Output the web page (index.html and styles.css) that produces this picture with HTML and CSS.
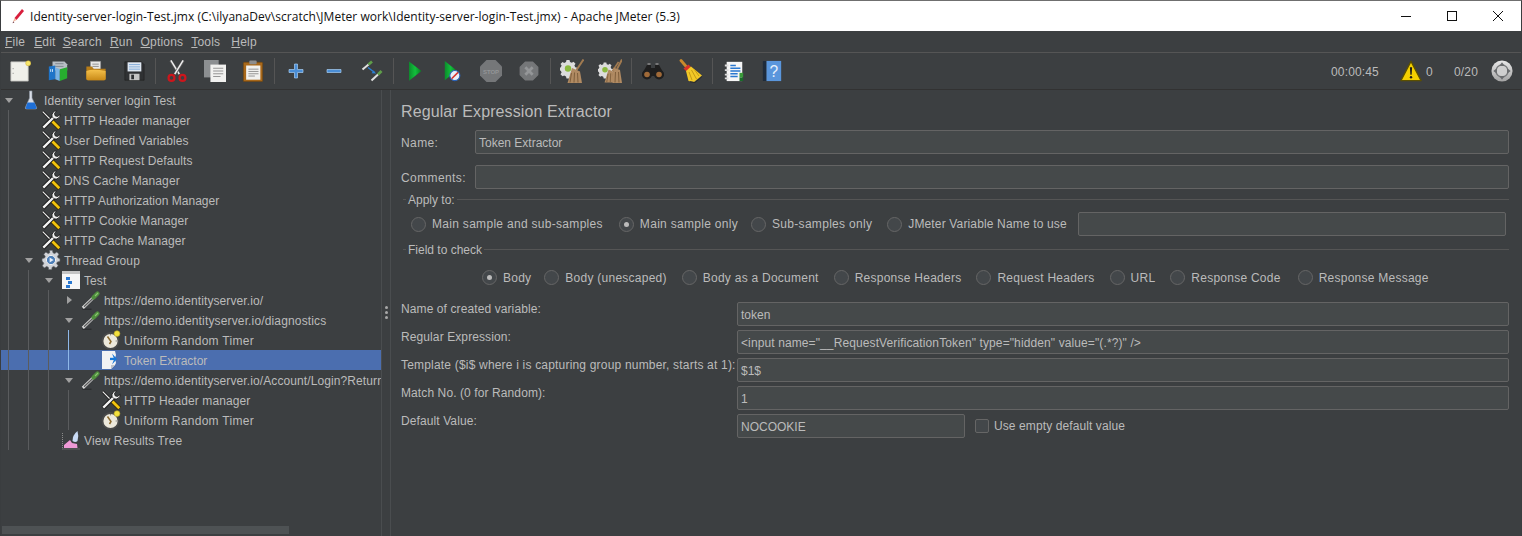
FILE: index.html
```html
<!DOCTYPE html>
<html lang="en">
<head>
<meta charset="utf-8">
<title>Apache JMeter</title>
<link rel="stylesheet" href="styles.css">
</head>
<body>
<svg class="sprite" aria-hidden="true">
<defs>
<linearGradient id="g-green" x1="0" y1="0" x2="1" y2="0"><stop offset="0" stop-color="#0c8c2c"/><stop offset=".5" stop-color="#12c03c"/><stop offset="1" stop-color="#0a7a22"/></linearGradient>
<linearGradient id="g-grey" x1="0" y1="0" x2="0" y2="1"><stop offset="0" stop-color="#e8e8e8"/><stop offset="1" stop-color="#a4a4a4"/></linearGradient>
<linearGradient id="g-folder" x1="0" y1="0" x2="0" y2="1"><stop offset="0" stop-color="#f4c04a"/><stop offset="1" stop-color="#c98a18"/></linearGradient>
<symbol id="i-tool" viewBox="0 0 20 20">
<path d="M1.500 1.500 10 10" stroke="#141414" stroke-width="2.600" fill="none"/>
<path d="M1.700 1.700 10 10" stroke="#efefef" stroke-width="1.200" fill="none"/>
<path d="M10.500 10.500 18.500 18.500" stroke="#2e2400" stroke-width="4.200" fill="none"/>
<path d="M11 11 18.300 18.300" stroke="#f2c40f" stroke-width="2.800" fill="none"/>
<path d="M2 18 13 7" stroke="#141414" stroke-width="4" fill="none"/>
<path d="M2.300 17.700 13 7" stroke="#f2f2f2" stroke-width="2.400" fill="none"/>
<path d="M15.600.8a4.600 4.600 0 0 0-4.400 6.100l1.900 1.900a4.600 4.600 0 0 0 6.100-4.400l-2.700 2.100-2.400-.7-.6-2.300z" fill="#f0f0f0" stroke="#141414" stroke-width=".8"/>
</symbol>
<symbol id="i-flask" viewBox="0 0 20 20">
<path d="M8.500 1h2.500v7l4.600 9.500q.4 1.500-1.200 1.500H5.600q-1.600 0-1.200-1.500L8.500 8z" fill="#d8dde6" stroke="#8d97a5" stroke-width=".6"/>
<path d="M6.500 12.500h7l2 5q.2 1.400-1.200 1.400H5.700q-1.400 0-1-1.400z" fill="#1f6fd6"/>
</symbol>
<symbol id="i-gear" viewBox="0 0 20 20">
<path d="M8.500 1h3l.5 2.600 1.600.7 2.200-1.500 2.200 2.200-1.500 2.200.7 1.600L19 9.300v3l-2.600.5-.7 1.600 1.500 2.200-2.200 2.200-2.200-1.500-1.600.7-.5 2.500h-3l-.5-2.500-1.600-.7-2.200 1.500-2.200-2.200 1.500-2.200-.7-1.600L1 12.300v-3l2.500-.5.7-1.600-1.500-2.200 2.200-2.200 2.200 1.500 1.600-.7z" fill="#d2d4d8" stroke="#55595e" stroke-width=".7" transform="translate(0 -.8)"/>
<circle cx="10" cy="10" r="4.600" fill="#4d7fb8" stroke="#f0f0f0" stroke-width="1"/>
<path d="M8.600 7.600 12.600 10l-4 2.400z" fill="#e8eef8"/>
</symbol>
<symbol id="i-frag" viewBox="0 0 20 20">
<rect x="1" y="1" width="18" height="18" fill="#f6f6f6"/>
<rect x="1" y="1" width="18" height="3" fill="#c4c4c4"/>
<rect x="5" y="7" width="4" height="3" fill="#2a78d0"/>
<rect x="7" y="11" width="4" height="3" fill="#2a78d0"/>
<rect x="5" y="15" width="4" height="3" fill="#2a78d0"/>
</symbol>
<symbol id="i-drop" viewBox="0 0 20 20">
<path d="M1.500 19.300h9" stroke="#2c2e30" stroke-width="1.400" fill="none"/>
<path d="M1.800 17.800 12.500 7.500" stroke="#d8d8d8" stroke-width="3" fill="none"/>
<path d="M3 16.800 12 8.200" stroke="#5c5c5c" stroke-width="1.200" fill="none"/>
<path d="M12.500 7.500 16.500 3.500" stroke="#4f8f3d" stroke-width="4.200" stroke-linecap="round" fill="none"/>
<path d="M14 6 17 3" stroke="#8cc473" stroke-width="1.100" fill="none"/>
</symbol>
<symbol id="i-timer" viewBox="0 0 20 20">
<circle cx="9.500" cy="11" r="8" fill="#ede9dc" stroke="#4a4a4a" stroke-width="1.800"/>
<path d="M6.500 6.500 10 11.500 8.500 14" stroke="#8c6a2e" stroke-width="1.500" fill="none"/>
<path d="M9.500 4v1.400M16 11h-1.400" stroke="#888" fill="none"/>
<circle cx="16" cy="3.600" r="2.900" fill="#f4e13e" stroke="#b9a521" stroke-width=".6"/>
</symbol>
<symbol id="i-extract" viewBox="0 0 20 20">
<path d="M1 1h13l1 4-1 3 1 5-1 2-4 4H1z" fill="#f2f2f4"/>
<path d="M10 19v-4h4z" fill="#bfc2c8"/>
<path d="M11 3.500 16 9l-5 5.500 2.200-5.500z" fill="#1878d8"/>
<path d="M9 7.800h5v2.300H9z" fill="#1878d8"/>
</symbol>
<symbol id="i-result" viewBox="0 0 20 20">
<path d="M1.500 3v16.200M1.500 19H19" stroke="#8b8b8b" stroke-dasharray="1 1" fill="none"/>
<path d="M3 18v-3l6-5 2 3 5 1 .5 4z" fill="#ef9ad7"/>
<path d="M11.500 11q0-6 5-10 1.500 5 0 10-2 2-5 0z" fill="#c9dbf5"/>
</symbol>
<symbol id="t-new" viewBox="0 0 24 24">
<path d="M2 2h19v21H2z" fill="#f0f0ea" stroke="#b9b9b3" stroke-width=".8"/>
<path d="M4.500 9v1M4.500 14v1" stroke="#777" fill="none"/>
<circle cx="21" cy="3.500" r="2.800" fill="#f6e56a" stroke="#c9a92f" stroke-width=".5"/>
</symbol>
<symbol id="t-tmpl" viewBox="0 0 24 24">
<path d="M6 1.500h13l3 3v7H6z" fill="#b8bec4"/>
<path d="M9 4h9M9 7h9" stroke="#7e868e" fill="none"/>
<path d="M2 7l7-1v15l-7 1z" fill="#1f74c8"/>
<path d="M9 8l5 2v13l-5-2z" fill="#79b3e6"/>
<path d="M14 10l8-2v12l-8 3z" fill="#27ad2f"/>
<path d="M4 10v3M6 10v3" stroke="#cfe6fa" fill="none"/>
</symbol>
<symbol id="t-open" viewBox="0 0 24 24">
<path d="M6 1.500h11v10H6z" fill="#e8e8e8" stroke="#9a9a9a" stroke-width=".6"/>
<path d="M8 4.500h7M8 7h7" stroke="#8a8a8a" fill="none"/>
<path d="M1.500 7h6l2 2.500h13v11q0 1.500-1.500 1.500H3q-1.500 0-1.500-1.500z" fill="#b77d18"/>
<path d="M1.500 12q7-2.500 21 0v8.500q0 1.500-1.500 1.500H3q-1.500 0-1.500-1.500z" fill="url(#g-folder)"/>
</symbol>
<symbol id="t-save" viewBox="0 0 24 24">
<path d="M2 2h18l3 3v17H2z" fill="#2f3133" stroke="#1b1b1b" stroke-width=".6"/>
<rect x="5" y="2.500" width="15" height="10" fill="#dfe8f2"/>
<path d="M6.500 5h12M6.500 7.500h12M6.500 10h12" stroke="#7ea8d8" fill="none"/>
<rect x="7" y="15" width="11" height="7" fill="#c4c4c4"/>
<rect x="9" y="16" width="3" height="5" fill="#2f3133"/>
</symbol>
<symbol id="t-cut" viewBox="0 0 24 24">
<path d="M5 .5l9.500 15" stroke="#5a5a5a" stroke-width="3" fill="none"/>
<path d="M5.300 .5l9.200 15" stroke="#f0f0f0" stroke-width="1.600" fill="none"/>
<path d="M19 .5L9.500 15.500" stroke="#5a5a5a" stroke-width="3" fill="none"/>
<path d="M18.700 .5L9.500 15.500" stroke="#f0f0f0" stroke-width="1.600" fill="none"/>
<circle cx="6" cy="19.500" r="3.200" fill="none" stroke="#cc161c" stroke-width="2.400"/>
<circle cx="18" cy="19.500" r="3.200" fill="none" stroke="#cc161c" stroke-width="2.400"/>
</symbol>
<symbol id="t-copy" viewBox="0 0 24 24">
<rect x="0" y="0" width="16" height="19" fill="#8c8f91"/>
<path d="M7 5h17v19H7z" fill="#f1f1ef"/>
<path d="M10 9h11M10 12h11M10 15h11M10 18h8" stroke="#8d8d8d" fill="none"/>
</symbol>
<symbol id="t-paste" viewBox="0 0 24 24">
<rect x="1.500" y="2.500" width="21" height="21" rx="1" fill="#a8681a" stroke="#6e430d" stroke-width=".6"/>
<path d="M4.500 6h15.500v15.500H4.500z" fill="#f1f1ef"/>
<rect x="8" y=".5" width="8" height="4" rx="1" fill="#8d8d8d"/>
<path d="M7 10h11M7 12.500h11M7 15h11M7 17.500h7" stroke="#8d8d8d" fill="none"/>
</symbol>
<symbol id="t-plus" viewBox="0 0 24 24">
<path d="M10.500 5h3v5.500H19v3h-5.500V19h-3v-5.500H5v-3h5.500z" fill="#4a8ed6" stroke="#a8cdf0" stroke-width=".7"/>
</symbol>
<symbol id="t-minus" viewBox="0 0 24 24">
<path d="M5 10.500h14v3H5z" fill="#4a8ed6" stroke="#a8cdf0" stroke-width=".7"/>
</symbol>
<symbol id="t-toggle" viewBox="0 0 24 24">
<path d="M2.500 10.500 8.500 5.500" stroke="#e0e0e0" stroke-width="2" fill="none"/>
<path d="M8.500 5.500l3.500-3" stroke="#5f9e4a" stroke-width="2.800" fill="none"/>
<path d="M11.500 21.500 18 15.500" stroke="#e0e0e0" stroke-width="2" fill="none"/>
<path d="M18 15.500l3.500-3.500" stroke="#5f9e4a" stroke-width="2.800" fill="none"/>
<path d="M8 8.500l6 4.500" stroke="#2b7fd4" stroke-width="1.300" fill="none"/>
<path d="M16 14.500l-4.500-.3 2.200-2.700z" fill="#2b7fd4"/>
</symbol>
<symbol id="t-start" viewBox="0 0 24 24">
<path d="M5.500 1.500 19 12 5.500 22.500z" fill="url(#g-green)"/>
</symbol>
<symbol id="t-startn" viewBox="0 0 24 24">
<path d="M3 1l13 10.500L3 22z" fill="url(#g-green)"/>
<circle cx="14" cy="17" r="5.500" fill="#e8eef8" stroke="#2a62b8" stroke-width="1.200"/>
<path d="M10.500 20.500l7-7" stroke="#d6312a" stroke-width="1.600" fill="none"/>
</symbol>
<symbol id="t-stop" viewBox="0 0 24 24">
<path d="M7.500 1h9L23 7.500v9L16.500 23h-9L1 16.500v-9z" fill="#757779"/>
<text x="12" y="14.500" text-anchor="middle" class="stop-text">STOP</text>
</symbol>
<symbol id="t-shut" viewBox="0 0 24 24">
<path d="M8 2.500h8L21.500 8v8L16 21.500H8L2.500 16V8z" fill="#757779" stroke="#757779" stroke-width="1.500" stroke-linejoin="round"/>
<path d="M8 8l8 8M16 8l-8 8" stroke="#949698" stroke-width="3" fill="none"/>
</symbol>
<symbol id="t-clear" viewBox="0 0 24 24">
<path d="M6.500 1h3l.5 2 1.800.8 1.700-1.100 2 2-1.100 1.700.8 1.800 2 .5v3l-2 .5-.8 1.800 1.100 1.700-2 2-1.700-1.100-1.800.8-.5 2h-3l-.5-2-1.800-.8L2.500 17.300.5 15.300l1.100-1.700-.8-1.800-.8-.2v-3l.8-.2.8-1.800-1.100-1.700 2-2 1.700 1.100L6 3z" fill="#dcdcdc"/>
<circle cx="8" cy="9.500" r="3.200" fill="#8ab93f"/>
<path d="M23.500 .5 16.500 11" stroke="#a07a50" stroke-width="2" fill="none"/>
<path d="M12 9l8 3.500L22 24H7.500z" fill="#b08a62"/>
<path d="M11.500 14l-1.500 9.500M14.500 13.500l-.5 10M17.500 14l.5 9.500" stroke="#7f5f3c" fill="none"/>
</symbol>
<symbol id="t-clearall" viewBox="0 0 24 24">
<use href="#t-clear" width="21" height="22" x="0" y="2"/>
<path d="M24 .5 19 10" stroke="#a07a50" stroke-width="2" fill="none"/>
<path d="M15.500 8.500l6.500 2.500 2 13h-9.500z" fill="#b08a62"/>
<path d="M17.500 13l-.5 10.500M20.500 13l.5 10.500" stroke="#7f5f3c" fill="none"/>
</symbol>
<symbol id="t-search" viewBox="0 0 24 24">
<path d="M6 6h4v3h4V6h4l5 9v2H1v-2z" fill="#1f1f1f"/>
<path d="M6.500 5h3M14.500 5h3" stroke="#8a8a8a" stroke-width="1.400" fill="none"/>
<circle cx="6" cy="15.500" r="5" fill="#1f1f1f"/>
<circle cx="18" cy="15.500" r="5" fill="#1f1f1f"/>
<circle cx="6" cy="15.500" r="2.800" fill="#a06a38"/>
<circle cx="18" cy="15.500" r="2.800" fill="#a06a38"/>
</symbol>
<symbol id="t-broom" viewBox="0 0 24 24">
<path d="M2 1.500l6 7" stroke="#c8892c" stroke-width="2.800" stroke-linecap="round" fill="none"/>
<path d="M4.500 9.500l5-4 2.500 2.500-4.500 4.500z" fill="#d6312a"/>
<path d="M7 12l5-4.500 11 9-8 6.500-5.500-1z" fill="#f2c827"/>
<path d="M10 13l3 8M12.500 11l5 9M15 10l5 7" stroke="#c59a14" fill="none"/>
<path d="M11 22.800l5 .8 7-6" stroke="#2a2c2e" stroke-width="1" fill="none"/>
</symbol>
<symbol id="t-func" viewBox="0 0 24 24">
<rect x="4" y="2" width="17" height="21" fill="#f6f6f6"/>
<path d="M8 6h6M8 9h11M8 12h11M8 15h8M8 18h8" stroke="#2a78d0" stroke-width="1.400" fill="none"/>
<rect x="18" y="14" width="4" height="5" fill="#3a9a3a"/>
<rect x="18" y="19" width="4" height="4" fill="#1a6a2a"/>
<path d="M2 6h4M2 11h4M2 16h4M2 20h4" stroke="#dcdcdc" stroke-width="2" fill="none"/>
</symbol>
<symbol id="t-help" viewBox="0 0 24 24">
<path d="M3 1h3v22H3q-1 0-1-1V2q0-1 1-1z" fill="#1f2b3a"/>
<rect x="6" y="1" width="16" height="22" fill="#5a96dc"/>
<text x="14" y="18" text-anchor="middle" class="help-text">?</text>
</symbol>
<symbol id="t-warn" viewBox="0 0 24 24">
<path d="M12 1.500 23 22.500H1z" fill="#f4d000" stroke="#5c5000" stroke-width="1.400" stroke-linejoin="round"/>
<path d="M10.800 8h2.400l-.5 8h-1.400z" fill="#1c1c1c"/>
<circle cx="12" cy="18.800" r="1.300" fill="#1c1c1c"/>
</symbol>
<symbol id="t-global" viewBox="0 0 24 24">
<circle cx="12" cy="12" r="11.500" fill="url(#g-grey)"/>
<circle cx="12" cy="12" r="6.500" fill="none" stroke="#7d7f81" stroke-width="1.600"/>
<path d="M12 2.500 15 6.500H9zM12 21.500 9 17.500h6zM2.500 12 6.500 9v6zM21.500 12 17.500 15V9z" fill="#6a6c6e"/>
<circle cx="12" cy="12" r="5.500" fill="#cfcfcf"/>
</symbol>
</defs>
</svg>

<div class="window">
  <header class="titlebar">
    <svg class="app-icon" viewBox="0 0 16 16"><path d="M13 1 5.500 10 7.500 12 15 3z" fill="#d81e3c"/><path d="M5.500 10 4 14l3.500-2z" fill="#f2b8a0"/><path d="M4.300 13.500l-.8 1.800 1.900-1z" fill="#5c2030"/></svg>
    <span class="title-text">Identity-server-login-Test.jmx (C:\ilyanaDev\scratch\JMeter work\Identity-server-login-Test.jmx) - Apache JMeter (5.3)</span>
    <div class="win-controls">
      <span class="win-btn"><svg class="win-glyph" viewBox="0 0 12 12"><path d="M1 6.500h10" stroke="#111" fill="none"/></svg></span>
      <span class="win-btn"><svg class="win-glyph" viewBox="0 0 12 12"><rect x="1.500" y="1.500" width="9" height="9" stroke="#111" fill="none"/></svg></span>
      <span class="win-btn"><svg class="win-glyph" viewBox="0 0 12 12"><path d="M1 1l10 10M11 1 1 11" stroke="#111" fill="none"/></svg></span>
    </div>
  </header>

  <nav class="menubar">
    <span class="menu menu-file"><u>F</u>ile</span>
    <span class="menu menu-edit"><u>E</u>dit</span>
    <span class="menu"><u>S</u>earch</span>
    <span class="menu"><u>R</u>un</span>
    <span class="menu"><u>O</u>ptions</span>
    <span class="menu menu-tools"><u>T</u>ools</span>
    <span class="menu"><u>H</u>elp</span>
  </nav>

  <div class="toolbar">
    <span class="tool"><svg class="tool-icon"><use href="#t-new"/></svg></span>
    <span class="tool"><svg class="tool-icon"><use href="#t-tmpl"/></svg></span>
    <span class="tool"><svg class="tool-icon"><use href="#t-open"/></svg></span>
    <span class="tool"><svg class="tool-icon"><use href="#t-save"/></svg></span>
    <span class="tool-sep"></span>
    <span class="tool"><svg class="tool-icon"><use href="#t-cut"/></svg></span>
    <span class="tool"><svg class="tool-icon"><use href="#t-copy"/></svg></span>
    <span class="tool"><svg class="tool-icon"><use href="#t-paste"/></svg></span>
    <span class="tool-sep"></span>
    <span class="tool"><svg class="tool-icon tool-lg"><use href="#t-plus"/></svg></span>
    <span class="tool"><svg class="tool-icon tool-lg"><use href="#t-minus"/></svg></span>
    <span class="tool"><svg class="tool-icon tool-lg"><use href="#t-toggle"/></svg></span>
    <span class="tool-sep"></span>
    <span class="tool"><svg class="tool-icon"><use href="#t-start"/></svg></span>
    <span class="tool"><svg class="tool-icon"><use href="#t-startn"/></svg></span>
    <span class="tool"><svg class="tool-icon tool-lg"><use href="#t-stop"/></svg></span>
    <span class="tool"><svg class="tool-icon"><use href="#t-shut"/></svg></span>
    <span class="tool-sep"></span>
    <span class="tool"><svg class="tool-icon tool-lg"><use href="#t-clear"/></svg></span>
    <span class="tool"><svg class="tool-icon tool-lg"><use href="#t-clearall"/></svg></span>
    <span class="tool-sep"></span>
    <span class="tool"><svg class="tool-icon tool-lg"><use href="#t-search"/></svg></span>
    <span class="tool"><svg class="tool-icon tool-lg"><use href="#t-broom"/></svg></span>
    <span class="tool-sep"></span>
    <span class="tool"><svg class="tool-icon"><use href="#t-func"/></svg></span>
    <span class="tool"><svg class="tool-icon"><use href="#t-help"/></svg></span>
    <div class="status">
      <span class="status-time">00:00:45</span>
      <svg class="status-warn"><use href="#t-warn"/></svg>
      <span class="status-errs">0</span>
      <span class="status-threads">0/20</span>
      <svg class="status-global"><use href="#t-global"/></svg>
    </div>
  </div>

  <main class="split">
    <aside class="tree-pane">
      <div class="tree">
        <span class="guide guide-a"></span>
        <span class="guide guide-b"></span>
        <span class="guide guide-c"></span>
        <span class="guide guide-d"></span>
        <span class="guide guide-e"></span>
        <div class="row l0"><span class="arrow down"></span><svg class="node-icon"><use href="#i-flask"/></svg><span class="node-text">Identity server login Test</span></div>
        <div class="row l1"><span class="arrow"></span><svg class="node-icon"><use href="#i-tool"/></svg><span class="node-text">HTTP Header manager</span></div>
        <div class="row l1"><span class="arrow"></span><svg class="node-icon"><use href="#i-tool"/></svg><span class="node-text">User Defined Variables</span></div>
        <div class="row l1"><span class="arrow"></span><svg class="node-icon"><use href="#i-tool"/></svg><span class="node-text">HTTP Request Defaults</span></div>
        <div class="row l1"><span class="arrow"></span><svg class="node-icon"><use href="#i-tool"/></svg><span class="node-text">DNS Cache Manager</span></div>
        <div class="row l1"><span class="arrow"></span><svg class="node-icon"><use href="#i-tool"/></svg><span class="node-text narrow">HTTP Authorization Manager</span></div>
        <div class="row l1"><span class="arrow"></span><svg class="node-icon"><use href="#i-tool"/></svg><span class="node-text">HTTP Cookie Manager</span></div>
        <div class="row l1"><span class="arrow"></span><svg class="node-icon"><use href="#i-tool"/></svg><span class="node-text">HTTP Cache Manager</span></div>
        <div class="row l1"><span class="arrow down"></span><svg class="node-icon"><use href="#i-gear"/></svg><span class="node-text">Thread Group</span></div>
        <div class="row l2"><span class="arrow down"></span><svg class="node-icon"><use href="#i-frag"/></svg><span class="node-text">Test</span></div>
        <div class="row l3"><span class="arrow right"></span><svg class="node-icon"><use href="#i-drop"/></svg><span class="node-text">https://demo.identityserver.io/</span></div>
        <div class="row l3"><span class="arrow down"></span><svg class="node-icon"><use href="#i-drop"/></svg><span class="node-text url">https://demo.identityserver.io/diagnostics</span></div>
        <div class="row l4"><span class="arrow"></span><svg class="node-icon"><use href="#i-timer"/></svg><span class="node-text spaced">Uniform Random Timer</span></div>
        <div class="row l4 selected"><span class="arrow"></span><svg class="node-icon"><use href="#i-extract"/></svg><span class="node-text tight">Token Extractor</span></div>
        <div class="row l3"><span class="arrow down"></span><svg class="node-icon"><use href="#i-drop"/></svg><span class="node-text">https://demo.identityserver.io/Account/Login?Return</span></div>
        <div class="row l4"><span class="arrow"></span><svg class="node-icon"><use href="#i-tool"/></svg><span class="node-text">HTTP Header manager</span></div>
        <div class="row l4"><span class="arrow"></span><svg class="node-icon"><use href="#i-timer"/></svg><span class="node-text spaced">Uniform Random Timer</span></div>
        <div class="row l2"><span class="arrow"></span><svg class="node-icon"><use href="#i-result"/></svg><span class="node-text">View Results Tree</span></div>
      </div>
      <div class="hscroll"><div class="hscroll-thumb"></div></div>
    </aside>

    <div class="divider"><span class="dot"></span><span class="dot"></span><span class="dot"></span></div>

    <section class="editor">
      <h1 class="editor-title">Regular Expression Extractor</h1>
      <div class="name-row"><span class="name-label">Name:</span><div class="field grow">Token Extractor</div></div>
      <div class="name-row comments"><span class="name-label">Comments:</span><div class="field grow"></div></div>

      <div class="legend"><span class="legend-text">Apply to:</span></div>
      <div class="radios radios-apply">
        <span class="radio r-main"><span class="dial"></span>Main sample and sub-samples</span>
        <span class="radio r-only"><span class="dial on"></span>Main sample only</span>
        <span class="radio"><span class="dial"></span>Sub-samples only</span>
        <span class="radio r-var"><span class="dial"></span>JMeter Variable Name to use</span>
        <div class="field grow apply-field"></div>
      </div>

      <div class="legend"><span class="legend-text">Field to check</span></div>
      <div class="radios radios-field">
        <span class="radio r-body"><span class="dial on"></span>Body</span>
        <span class="radio"><span class="dial"></span>Body (unescaped)</span>
        <span class="radio"><span class="dial"></span>Body as a Document</span>
        <span class="radio"><span class="dial"></span>Response Headers</span>
        <span class="radio"><span class="dial"></span>Request Headers</span>
        <span class="radio"><span class="dial"></span>URL</span>
        <span class="radio r-code"><span class="dial"></span>Response Code</span>
        <span class="radio"><span class="dial"></span>Response Message</span>
      </div>

      <div class="grid-form">
        <span class="grid-label">Name of created variable:</span><div class="field">token</div>
        <span class="grid-label">Regular Expression:</span><div class="field regex">&lt;input name="__RequestVerificationToken" type="hidden" value="(.*?)" /&gt;</div>
        <span class="grid-label wide">Template ($i$ where i is capturing group number, starts at 1):</span><div class="field">$1$</div>
        <span class="grid-label">Match No. (0 for Random):</span><div class="field">1</div>
        <span class="grid-label">Default Value:</span>
        <div class="default-row"><div class="field default-field">NOCOOKIE</div><span class="check"></span><span class="check-text">Use empty default value</span></div>
      </div>
    </section>
  </main>
</div>
</body>
</html>
```

FILE: styles.css
```css
* { box-sizing: border-box; }
html, body { margin: 0; padding: 0; height: 100%; overflow: hidden; }
body { background: #3c3f41; color: #bbbbbb; font: 12px "Liberation Sans", Arial, sans-serif; }
.sprite { position: absolute; width: 0; height: 0; overflow: hidden; }
.stop-text { font: bold 6px "Liberation Sans", sans-serif; fill: #939597; }
.help-text { font: 17px "Liberation Sans", sans-serif; fill: #e6f0fb; }

.window { height: 536px; display: flex; flex-direction: column; border-top: 1px solid #6f6f6f; border-left: 1px solid #3a3d3f; border-right: 1px solid #3a3d3f; }

.titlebar { height: 30px; flex: none; background: #ffffff; color: #111; display: flex; align-items: center; padding-left: 8px; }
.app-icon { width: 16px; height: 16px; flex: none; margin-right: 5px; }
.title-text { font: 12px "Open Sans", sans-serif; white-space: nowrap; letter-spacing: .04px; }
.win-controls { margin-left: auto; display: flex; }
.win-btn { width: 46px; height: 30px; display: flex; align-items: center; justify-content: center; }
.win-glyph { width: 12px; height: 12px; }

.menubar { height: 22px; flex: none; display: flex; align-items: center; padding-left: 4px; border-bottom: 1px solid #555555; gap: 8px; letter-spacing: .2px; }
.menu { white-space: nowrap; }
.menu-file { margin-right: 1px; }
.menu-edit { margin-right: -1px; }
.menu-tools { margin-right: 3px; }

.toolbar { height: 37px; flex: none; display: flex; align-items: center; border-bottom: 1px solid #323232; }
.tool { width: 38px; height: 36px; flex: none; display: flex; align-items: center; justify-content: center; }
.tool-icon { width: 22px; height: 22px; }
.tool-lg { width: 24px; height: 24px; }
.tool-sep { width: 5px; height: 26px; flex: none; background: linear-gradient(#555, #555) 2px 0 / 1px 100% no-repeat; }
.status { margin-left: auto; display: flex; align-items: center; padding-right: 8px; letter-spacing: .15px; padding-top: 1px; }
.status-time { width: 69px; }
.status-warn { width: 22px; height: 22px; margin: -2px 4px 0 0; }
.status-errs { width: 28px; }
.status-threads { width: 37px; }
.status-global { width: 22px; height: 22px; margin-top: -2px; }

.split { flex: 1; min-height: 0; display: flex; }

.tree-pane { width: 380px; flex: none; display: flex; flex-direction: column; overflow: hidden; }
.tree { position: relative; flex: 1; min-height: 0; overflow: hidden; }
.row { height: 20px; display: flex; align-items: center; white-space: nowrap; }
.l0 { padding-left: 0; }
.l1 { padding-left: 20px; }
.l2 { padding-left: 40px; }
.l3 { padding-left: 60px; }
.l4 { padding-left: 80px; }
.selected { background: #4b6eaf; }
.arrow { width: 20px; height: 20px; flex: none; position: relative; }
.arrow.down::before { content: ""; position: absolute; left: 4px; top: 8px; border-left: 4px solid transparent; border-right: 4px solid transparent; border-top: 5px solid #a0a0a0; }
.arrow.right::before { content: ""; position: absolute; left: 6px; top: 6px; border-top: 4px solid transparent; border-bottom: 4px solid transparent; border-left: 5px solid #a0a0a0; }
.node-icon { width: 20px; height: 20px; flex: none; margin-right: 3px; }
.node-text { flex: none; letter-spacing: .1px; padding-top: 2px; }
.url { letter-spacing: .15px; }
.spaced { letter-spacing: .3px; }
.tight { letter-spacing: 0; }
.narrow { letter-spacing: .03px; }

.guide { position: absolute; width: 1px; background: #5a5c5e; z-index: 1; }
.guide-a { left: 7px; top: 20px; height: 340px; }
.guide-b { left: 27px; top: 180px; height: 180px; }
.guide-c { left: 47px; top: 200px; height: 140px; }
.guide-d { left: 67px; top: 240px; height: 40px; background: #8fb8e8; }
.guide-e { left: 67px; top: 300px; height: 40px; }

.hscroll { height: 12px; flex: none; padding: 2px 0 2px 1px; }
.hscroll-thumb { width: 287px; height: 8px; background: #4e5254; }

.divider { width: 10px; flex: none; border-left: 1px solid #4a4d4f; border-right: 1px solid #4a4d4f; display: flex; flex-direction: column; align-items: center; justify-content: center; gap: 2px; padding-bottom: 2px; }
.dot { width: 3px; height: 3px; border-radius: 50%; background: #a8a8a8; }

.editor { flex: 1; min-width: 0; padding: 10px 12px 0 10px; }
.editor-title { margin: 0 0 8px; height: 22px; line-height: 24px; font-size: 16px; font-weight: normal; color: #bbbbbb; letter-spacing: .1px; }
.name-row { display: flex; align-items: center; }
.comments { margin-top: 11px; }
.name-label { width: 74px; flex: none; letter-spacing: .4px; padding-top: 2px; }
.field { height: 24px; line-height: 22px; padding: 1px 3px 0; background: #45494a; border: 1px solid #646464; border-radius: 2px; white-space: nowrap; overflow: hidden; }
.regex { letter-spacing: .11px; }
.grow { flex: 1; min-width: 0; }

.legend { height: 14px; margin-top: 3px; padding-left: 2px; display: flex; align-items: center; }
.legend::before { content: ""; width: 3px; height: 1px; background: #555; margin-right: 2px; }
.legend::after { content: ""; flex: 1; height: 1px; background: #555; margin-left: 2px; }
.legend-text { padding-top: 2px; }
.radios + .legend { margin-top: 6px; }

.radios { display: flex; align-items: center; height: 24px; }
.radios-apply { margin-top: 6px; padding-left: 10px; padding-right: 3px; gap: 15px; letter-spacing: .3px; }
.apply-field { margin-left: -4px; }
.radios-field { margin-top: 9px; padding-left: 81px; gap: 15px; letter-spacing: .25px; }
.radio { display: flex; align-items: center; white-space: nowrap; }
.radios-field .radio { padding-top: 1px; }
.r-main { margin-right: 1px; }
.r-only { margin-right: -2px; }
.r-var { letter-spacing: .15px; }
.r-body { margin-right: -2px; }
.r-code { margin-right: 2px; }
.dial { width: 15px; height: 15px; border-radius: 50%; border: 1px solid #666; background: #43474a; margin-right: 6px; flex: none; position: relative; }
.dial.on::after { content: ""; position: absolute; left: 4px; top: 4px; width: 5px; height: 5px; border-radius: 50%; background: #bbbbbb; }

.grid-form { margin-top: 13px; display: grid; grid-template-columns: 336px 1fr; grid-auto-rows: 24px; row-gap: 4px; }
.grid-label { white-space: nowrap; line-height: 14px; letter-spacing: .1px; }
.wide { letter-spacing: .19px; }
.default-row { display: flex; align-items: center; }
.default-field { width: 228px; flex: none; }
.check { width: 14px; height: 14px; margin: 0 5px 0 10px; border: 1px solid #666; border-radius: 2px; background: #43474a; flex: none; }
.check-text { letter-spacing: .1px; }
```
